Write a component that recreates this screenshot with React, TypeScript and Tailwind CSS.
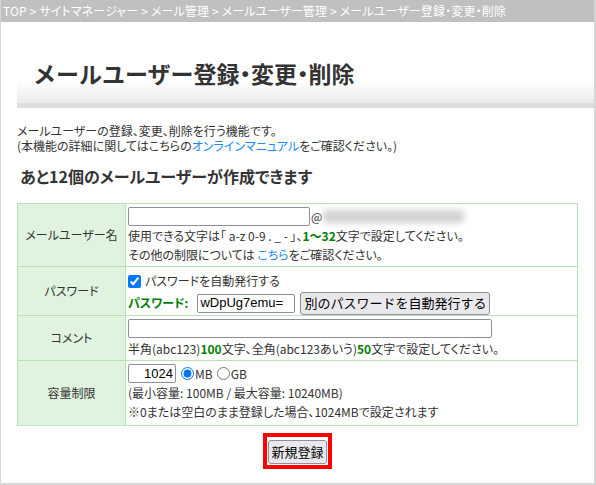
import React from "react";

const font = "font-['Noto_Sans_CJK_JP','Noto_Sans',sans-serif] [font-feature-settings:'palt']";

function Label({ children }: { children: React.ReactNode }) {
  return (
    <td className="w-[108px] bg-[#dff3df] border border-[#b8e3b8] text-center align-middle text-[12px] text-[#333]">
      {children}
    </td>
  );
}

const inputCls =
  "h-[19px] border border-[#8f8f9d] rounded-[2px] bg-white px-[2px] text-[13px] text-black outline-none font-['Liberation_Sans',sans-serif] [font-feature-settings:normal]";

export default function App() {
  return (
    <div className={`w-[596px] h-[485px] bg-white text-[#333] ${font}`}>
      <div className="h-[485px] border-l border-r-2 border-b-2 border-[#d6d6d6] flex flex-col">
        <div className="h-[22px] bg-[#c0c0c0] text-white text-[12px] leading-[22px] pl-[2px] whitespace-nowrap tracking-[0.15px]">
          TOP &gt; サイトマネージャー &gt; メール管理 &gt; メールユーザー管理 &gt; メールユーザー登録・変更・削除
        </div>

        <div className="ml-[16px] mt-[22px]">
          <div className="h-[59px] bg-gradient-to-b from-white from-[60%] to-[#ebebeb] flex items-start pt-[16px] pl-[16px]">
            <h1 className="text-[23px] leading-[27px] font-bold text-[#333] [font-feature-settings:normal]">
              メールユーザー登録<span className="[font-feature-settings:'palt']">・</span>変更
              <span className="[font-feature-settings:'palt']">・</span>削除
            </h1>
          </div>
          <div className="h-[5px] bg-[#dedede]" />
        </div>

        <div className="ml-[16px] mt-[15px] text-[12px] leading-[15px]">
          <p>メールユーザーの登録、変更、削除を行う機能です。</p>
          <p>
            (本機能の詳細に関してはこちらの<span className="text-[#1a8cff]">オンラインマニュアル</span>をご確認ください。)
          </p>
        </div>

        <h2 className="ml-[19px] mt-[13px] text-[16px] leading-[20px] font-bold text-[#333]">
          あと12個のメールユーザーが作成できます
        </h2>

        <table className="ml-[16px] mt-[17px] w-[561px] border-collapse">
          <tbody>
            <tr className="h-[63px]">
              <Label>メールユーザー名</Label>
              <td className="border border-[#b8e3b8] align-top px-[2px] pt-[3px] text-[12px] leading-[19px]">
                <div className="flex items-center h-[19px]">
                  <input className={`${inputCls} w-[182px]`} />
                  <span className="text-[12px] ml-[1px]">@</span>
                  <div className="ml-[1px] w-[141px] h-[13px] bg-[#d2d2d2] blur-[3px] rounded" />
                </div>
                <div>
                  使用できる文字は「 a-z 0-9 . _ - 」、<span className="text-[#008000] font-bold">1〜32</span>文字で設定してください。
                </div>
                <div>
                  その他の制限については <span className="text-[#1a8cff]">こちら</span>をご確認ください。
                </div>
              </td>
            </tr>
            <tr className="h-[49px]">
              <Label>パスワード</Label>
              <td className="border border-[#b8e3b8] align-top px-[2px] pt-[4px] text-[12px]">
                <label className="flex items-center h-[20px]">
                  <input type="checkbox" defaultChecked className="m-0 w-[13px] h-[13px] accent-[#0075ff]" />
                  <span className="ml-[4px]">パスワードを自動発行する</span>
                </label>
                <div className="flex items-center h-[24px]">
                  <span className="text-[#008000] font-bold">パスワード:</span>
                  <input className={`${inputCls} ml-[9px] w-[98px]`} defaultValue="wDpUg7emu=" />
                  <button className="ml-[5px] h-[23px] px-[3px] bg-[#e9e9ed] border border-[#8f8f9d] rounded-[3px] text-[13px] text-black [font-feature-settings:normal]">
                    別のパスワードを自動発行する
                  </button>
                </div>
              </td>
            </tr>
            <tr className="h-[45px]">
              <Label>コメント</Label>
              <td className="border border-[#b8e3b8] align-top px-[2px] pt-[3px] text-[12px] leading-[19px]">
                <input className={`${inputCls} w-[364px] block`} />
                <div className="mt-[1px]">
                  半角(abc123)<span className="text-[#008000] font-bold">100</span>文字、全角(abc123あいう)
                  <span className="text-[#008000] font-bold">50</span>文字で設定してください。
                </div>
              </td>
            </tr>
            <tr className="h-[65px]">
              <Label>容量制限</Label>
              <td className="border border-[#b8e3b8] align-top px-[2px] pt-[3px] text-[12px] leading-[19px]">
                <div className="flex items-center h-[19px]">
                  <input className={`${inputCls} w-[48px] text-right`} defaultValue="1024" />
                  <input type="radio" name="u" defaultChecked className="m-0 ml-[5px] w-[13px] h-[13px] accent-[#0075ff]" />
                  <span className="ml-[1px]">MB</span>
                  <input type="radio" name="u" className="m-0 ml-[4px] w-[13px] h-[13px]" />
                  <span className="ml-[1px]">GB</span>
                </div>
                <div>(最小容量: 100MB / 最大容量: 10240MB)</div>
                <div>※0または空白のまま登録した場合、1024MBで設定されます</div>
              </td>
            </tr>
          </tbody>
        </table>

        <div className="ml-[16px] w-[561px] mt-[7px] flex justify-center">
          <div className="border-[4px] border-[#ff0000] p-[1px]">
            <button className="h-[24px] w-[59px] bg-[#e9e9ed] border border-[#8f8f9d] rounded-[3px] text-[13px] text-black leading-none [font-feature-settings:normal]">
              新規登録
            </button>
          </div>
        </div>
      </div>
    </div>
  );
}
